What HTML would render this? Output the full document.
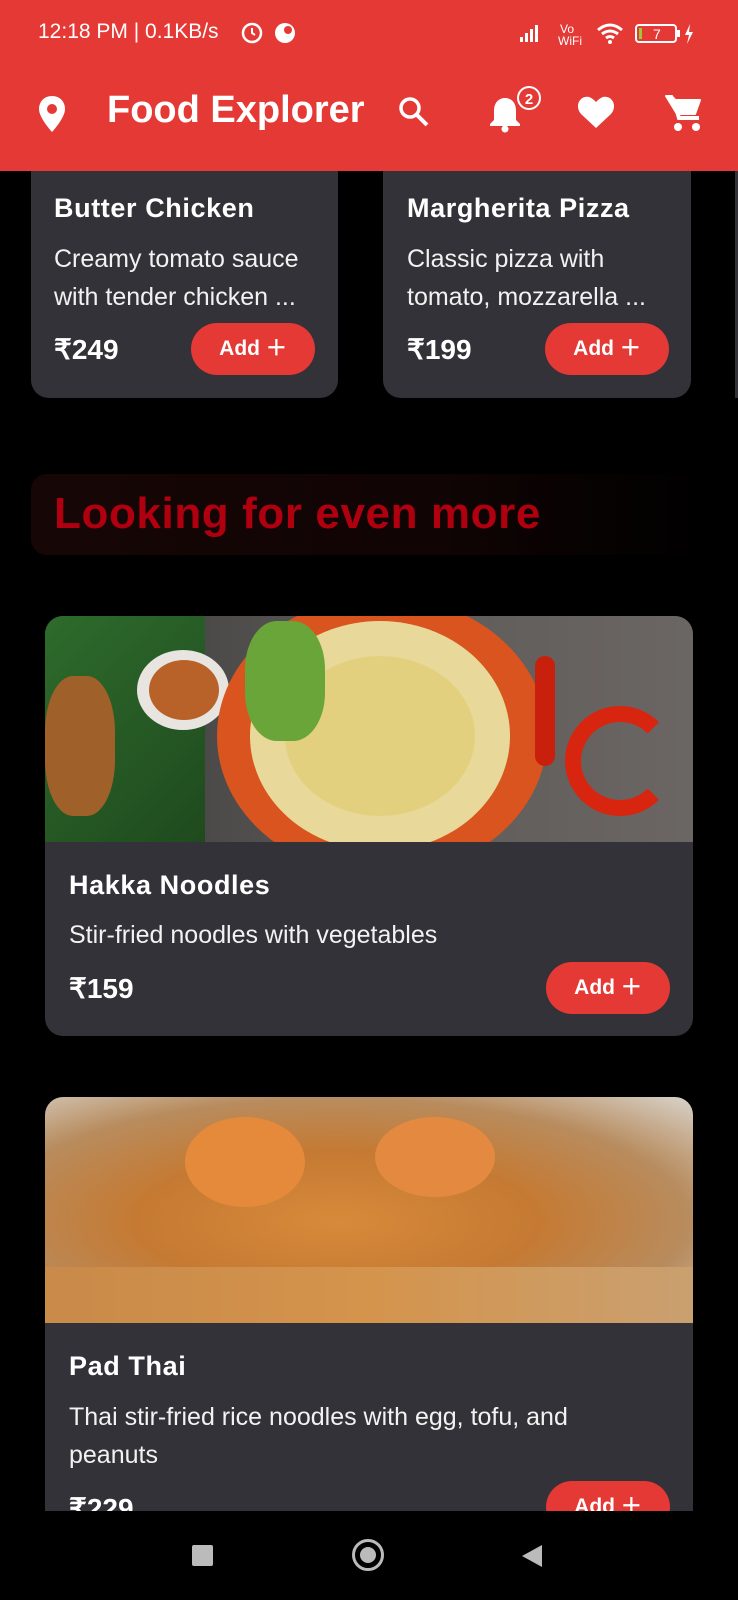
<!DOCTYPE html>
<html><head><meta charset="utf-8"><style>
*{margin:0;padding:0;box-sizing:border-box}
body{width:738px;height:1600px;background:#000;font-family:"Liberation Sans",sans-serif;position:relative;overflow:hidden;color:#fff}
.abs{position:absolute}
.hdr{left:0;top:0;width:738px;height:171px;background:#e53935}
.card{background:#333238;border-radius:18px;position:absolute;overflow:hidden}
.img{position:absolute;left:0;top:0;width:648px;height:226px;overflow:hidden}
.t{position:absolute;font-weight:bold;font-size:27px;letter-spacing:.6px}
.d{position:absolute;font-size:25px;line-height:38px;color:#f2f2f2;letter-spacing:0}
.p{position:absolute;font-weight:bold;font-size:28px}
.btn{position:absolute;background:#e53935;border-radius:26px;width:124px;height:52px;font-weight:bold;font-size:21px;text-align:center;line-height:52px}
</style></head><body>
<div class="card" style="left:31px;top:150px;width:307px;height:248px;border-radius:0 0 18px 18px"></div>
<div class="card" style="left:383px;top:150px;width:308px;height:248px;border-radius:0 0 18px 18px"></div>
<div class="card" style="left:735px;top:150px;width:20px;height:248px;border-radius:0"></div>
<div class="abs hdr"></div>
<div class="abs" style="left:38px;top:20px;font-size:21px;color:#fff">12:18 PM | 0.1KB/s</div>
<svg class="abs" style="left:240px;top:19px" width="60" height="28"><circle cx="12" cy="14" r="9" fill="none" stroke="#fff" stroke-width="2.5"/><path d="M12 9v5l3 2" stroke="#fff" stroke-width="2" fill="none"/><circle cx="45" cy="14" r="10" fill="#fff"/><circle cx="48" cy="11" r="4" fill="#e53935"/></svg>
<svg class="abs" style="left:518px;top:20px" width="190" height="28"><rect x="2" y="17" width="3" height="5" fill="#fff"/><rect x="7" y="13" width="3" height="9" fill="#fff"/><rect x="12" y="9" width="3" height="13" fill="#fff"/><rect x="17" y="5" width="3" height="17" fill="#fff"/><text x="42" y="13" font-size="12" fill="#fff" font-family="Liberation Sans">Vo</text><text x="40" y="25" font-size="12" fill="#fff" font-family="Liberation Sans">WiFi</text><path d="M80 10q12-10 24 0M84 14q8-6 16 0M88 18q4-3 8 0" stroke="#fff" stroke-width="3" fill="none"/><circle cx="92" cy="22" r="2" fill="#fff"/><rect x="118" y="5" width="40" height="17" rx="3" fill="none" stroke="#fff" stroke-width="2"/><rect x="121" y="8" width="3" height="11" fill="#9c3"/><text x="135" y="19" font-size="14" fill="#fff" font-family="Liberation Sans">7</text><rect x="159" y="10" width="3" height="7" fill="#fff"/><path d="M172 4l-5 11h4l-2 9 6-12h-4z" fill="#fff"/></svg>
<svg class="abs" style="left:36px;top:94px" width="32" height="40"><path d="M16 2C8 2 3 8 3 15c0 9 13 23 13 23s13-14 13-23C29 8 24 2 16 2z" fill="#fff"/><circle cx="16" cy="15" r="5" fill="#e53935"/></svg>
<div class="abs" style="left:107px;top:89px;font-size:38px;font-weight:bold">Food Explorer</div>
<svg class="abs" style="left:396px;top:94px" width="36" height="36"><circle cx="14" cy="14" r="9" fill="none" stroke="#fff" stroke-width="3.5"/><path d="M21 21l10 10" stroke="#fff" stroke-width="4"/></svg>
<svg class="abs" style="left:486px;top:84px" width="56" height="50"><path d="M18 14c-7 1-10 6-10 13v9l-4 4v2h30v-2l-4-4v-9c0-7-3-12-10-13z" fill="#fff"/><circle cx="19" cy="45" r="3.5" fill="#fff"/><circle cx="43" cy="14" r="12" fill="#fff"/><circle cx="43" cy="14" r="10" fill="#e53935"/><text x="43" y="20" text-anchor="middle" font-size="15" font-weight="bold" fill="#fff" font-family="Liberation Sans">2</text></svg>
<svg class="abs" style="left:576px;top:94px" width="40" height="36"><path d="M20 34L5 20C-2 12 4 1 13 3c3 1 5 3 7 5 2-2 4-4 7-5 9-2 15 9 8 17z" fill="#fff"/></svg>
<svg class="abs" style="left:664px;top:92px" width="40" height="42"><path d="M2 4h6l2 4h26l-5 14H13z" fill="#fff" stroke="#fff" stroke-width="2" stroke-linejoin="round"/><path d="M9 6l6 20h20" fill="none" stroke="#fff" stroke-width="4"/><circle cx="14" cy="35" r="4" fill="#fff"/><circle cx="32" cy="35" r="4" fill="#fff"/></svg>

<div class="t" style="left:54px;top:193px">Butter Chicken</div>
<div class="d" style="left:54px;top:240px">Creamy tomato sauce<br>with tender chicken ...</div>
<div class="p" style="left:54px;top:333px">₹249</div>
<div class="btn" style="left:191px;top:323px">Add ＋</div>
<div class="t" style="left:407px;top:193px">Margherita Pizza</div>
<div class="d" style="left:407px;top:240px">Classic pizza with<br>tomato, mozzarella ...</div>
<div class="p" style="left:407px;top:333px">₹199</div>
<div class="btn" style="left:545px;top:323px">Add ＋</div>

<div class="abs" style="left:31px;top:474px;width:680px;height:81px;border-radius:16px;background:linear-gradient(90deg,#170606,#100404 60%,#000)"></div>
<div class="abs" style="left:54px;top:489px;font-size:44px;font-weight:bold;color:#b0000f;letter-spacing:.6px">Looking for even more</div>

<div class="card" style="left:45px;top:616px;width:648px;height:420px">
<div class="img" style="background:linear-gradient(90deg,#3a3a3a,#5d5a58 50%,#6b6663)">
<div style="position:absolute;left:0;top:0;width:160px;height:226px;background:linear-gradient(135deg,#2e6b2c,#1f4a1e)"></div>
<div style="position:absolute;left:0;top:60px;width:70px;height:140px;background:#a0602a;border-radius:40%"></div>
<div style="position:absolute;left:92px;top:34px;width:92px;height:80px;border-radius:50%;background:#e8e4e0"></div>
<div style="position:absolute;left:104px;top:44px;width:70px;height:60px;border-radius:50%;background:#b8622a"></div>
<div style="position:absolute;left:172px;top:-20px;width:330px;height:280px;border-radius:50%;background:#d9541f"></div>
<div style="position:absolute;left:205px;top:5px;width:260px;height:230px;border-radius:50%;background:#e8d89a"></div>
<div style="position:absolute;left:240px;top:40px;width:190px;height:160px;border-radius:50%;background:#e3d07e"></div>
<div style="position:absolute;left:200px;top:5px;width:80px;height:120px;border-radius:40%;background:#6aa53a"></div>
<div style="position:absolute;left:520px;top:90px;width:110px;height:110px;border-radius:50%;border:16px solid #d8250f;border-right-color:transparent"></div>
<div style="position:absolute;left:490px;top:40px;width:20px;height:110px;border-radius:10px;background:#c8200c"></div>
</div>
</div>
<div class="t" style="left:69px;top:870px">Hakka Noodles</div>
<div class="d" style="left:69px;top:916px">Stir-fried noodles with vegetables</div>
<div class="p" style="left:69px;top:972px">₹159</div>
<div class="btn" style="left:546px;top:962px">Add ＋</div>

<div class="card" style="left:45px;top:1097px;width:648px;height:460px">
<div class="img" style="background:radial-gradient(ellipse at 45% 55%,#d88a3a,#c57a33 40%,#b88c5e 70%,#d8d4cc)">
<div style="position:absolute;left:140px;top:20px;width:120px;height:90px;border-radius:50%;background:#e58a3a"></div>
<div style="position:absolute;left:330px;top:20px;width:120px;height:80px;border-radius:50%;background:#e38a40"></div>
<div style="position:absolute;left:0;top:170px;width:648px;height:56px;background:linear-gradient(90deg,#c98a4a,#d4944c,#caa070)"></div>
</div>
</div>
<div class="t" style="left:69px;top:1351px">Pad Thai</div>
<div class="d" style="left:69px;top:1398px">Thai stir-fried rice noodles with egg, tofu, and<br>peanuts</div>
<div class="p" style="left:69px;top:1492px">₹229</div>
<div class="btn" style="left:546px;top:1481px">Add ＋</div>
<div class="abs" style="left:0;top:1511px;width:738px;height:89px;background:#000"></div>
<div class="abs" style="left:192px;top:1545px;width:21px;height:21px;background:#bbb;border-radius:2px"></div>
<div class="abs" style="left:352px;top:1539px;width:32px;height:32px;border-radius:50%;border:3px solid #bbb"></div>
<div class="abs" style="left:360px;top:1547px;width:16px;height:16px;border-radius:50%;background:#bbb"></div>
<svg class="abs" style="left:520px;top:1543px" width="24" height="26"><path d="M22 2v22L2 13z" fill="#bbb"/></svg>
</body></html>
